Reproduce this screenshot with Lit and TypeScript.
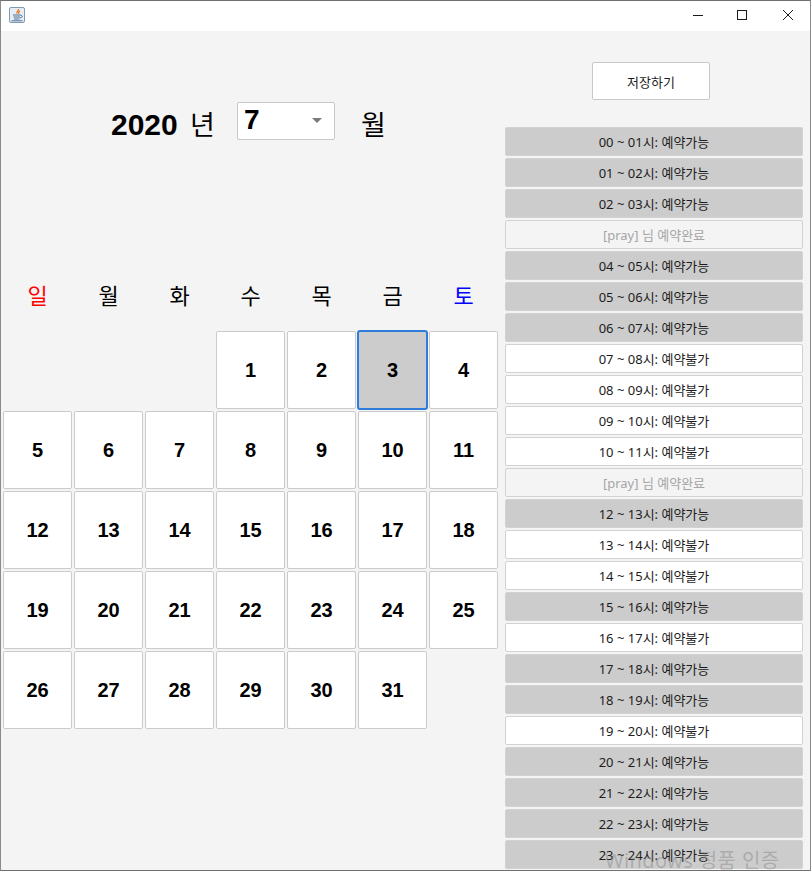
import { LitElement, html, css } from "lit";
import { customElement } from "lit/decorators.js";

const WEEKDAYS = [
  { label: "일", cls: "sun" },
  { label: "월", cls: "" },
  { label: "화", cls: "" },
  { label: "수", cls: "" },
  { label: "목", cls: "" },
  { label: "금", cls: "" },
  { label: "토", cls: "sat" },
];

type SlotState = "open" | "closed" | "booked";

// hour index -> state, same order as the list on the right
const SLOTS: SlotState[] = [
  "open", "open", "open", "booked", "open", "open", "open", "closed",
  "closed", "closed", "closed", "booked", "open", "closed", "closed", "open",
  "closed", "open", "open", "closed", "open", "open", "open", "open",
];

const pad = (n: number) => String(n).padStart(2, "0");

@customElement("app-root")
export class AppRoot extends LitElement {
  static styles = css`
    :host {
      display: block;
      width: 811px;
      height: 871px;
      overflow: hidden;
      position: relative;
      box-sizing: border-box;
      border-top: 1px solid #6f6f6f;
      border-left: 1px solid #8a8a8a;
      border-right: 1px solid #8a8a8a;
      border-bottom: 1px solid #6f6f6f;
      background: #f4f4f4;
      font-family: "Noto Sans", "Noto Sans CJK KR", sans-serif;
      color: #1c1c1c;
    }
    .titlebar {
      display: flex;
      align-items: center;
      height: 30px;
      background: #fff;
      padding-left: 8px;
    }
    .app-icon {
      width: 16px;
      height: 16px;
      display: block;
      margin-top: -2px;
    }
    .controls {
      margin-left: auto;
      display: flex;
      margin-top: -2px;
    }
    .ctl {
      width: 45px;
      height: 30px;
      display: flex;
      align-items: center;
      justify-content: center;
    }
    .ctl.max svg {
      margin-right: 2px;
    }
    .content {
      display: grid;
      grid-template-columns: 504px 298px;
      height: 839px;
    }
    .left {
      display: flex;
      flex-direction: column;
      padding-left: 2px;
    }
    .month-bar {
      display: flex;
      align-items: center;
      height: 62px;
      margin-top: 61px;
      padding-left: 108px;
      font-family: "Liberation Sans", "Noto Sans CJK KR", sans-serif;
      color: #000;
    }
    .year {
      font-size: 30px;
      font-weight: 700;
      width: 126px;
      white-space: nowrap;
    }
    .year span {
      font-size: 27px;
      font-weight: 400;
      margin-left: 4px;
    }
    .combo {
      box-sizing: border-box;
      width: 98px;
      height: 38px;
      margin-bottom: 4px;
      background: #fff;
      border: 1px solid #c8c8c8;
      border-radius: 2px;
      display: flex;
      align-items: flex-start;
      justify-content: space-between;
      padding: 0 12px 0 6px;
      font-size: 28px;
      font-weight: 700;
      line-height: 34px;
    }
    .combo i {
      width: 0;
      height: 0;
      margin-top: 15px;
      border-left: 5px solid transparent;
      border-right: 5px solid transparent;
      border-top: 5px solid #7a7a7a;
    }
    .month-label {
      font-size: 27px;
      margin-left: 26px;
    }
    .weekdays {
      display: grid;
      grid-template-columns: repeat(7, 69px);
      column-gap: 2px;
      margin-top: 120px;
      height: 40px;
      align-items: center;
      font-family: "Liberation Sans", "Noto Sans CJK KR", sans-serif;
      font-size: 22px;
      color: #000;
      text-align: center;
    }
    .sun {
      color: #ff0000;
    }
    .sat {
      color: #0000ff;
    }
    .days {
      display: grid;
      grid-template-columns: repeat(7, 69px);
      grid-auto-rows: 78px;
      column-gap: 2px;
      row-gap: 2px;
      margin-top: 17px;
    }
    .day {
      box-sizing: border-box;
      background: #fff;
      border: 1px solid #cbcbcb;
      border-radius: 2px;
      display: flex;
      align-items: center;
      justify-content: center;
      font-family: "Liberation Sans", sans-serif;
      font-size: 20px;
      font-weight: 700;
      color: #000;
    }
    .day.selected {
      background: #ccc;
      outline: 2px solid #2f7ddb;
      outline-offset: -1px;
    }
    .right {
      display: flex;
      flex-direction: column;
      align-items: stretch;
    }
    .save {
      box-sizing: border-box;
      align-self: center;
      width: 118px;
      height: 38px;
      margin-top: 31px;
      margin-right: 6px;
      margin-bottom: 27px;
      background: #fff;
      border: 1px solid #c8c8c8;
      border-radius: 2px;
      display: flex;
      align-items: center;
      justify-content: center;
      font-size: 13px;
      font-family: "Noto Sans CJK KR", sans-serif;
    }
    .slots {
      display: flex;
      flex-direction: column;
      gap: 2px;
    }
    .slot {
      box-sizing: border-box;
      height: 29px;
      border: 1px solid #d2d2d2;
      border-radius: 2px;
      display: flex;
      align-items: center;
      justify-content: center;
      font-size: 13px;
      white-space: pre;
    }
    .slot.open {
      background: #ccc;
    }
    .slot.closed {
      background: #fff;
    }
    .slot.booked {
      background: #f4f4f4;
      color: #a6a6a6;
    }
    .watermark {
      position: absolute;
      left: 604px;
      top: 847px;
      font-family: "Noto Sans", "Noto Sans CJK KR", sans-serif;
      font-size: 20px;
      line-height: 26px;
      color: rgba(130, 130, 130, 0.45);
      white-space: nowrap;
      letter-spacing: 0.4px;
    }
  `;

  private javaIcon() {
    return html`<svg class="app-icon" viewBox="0 0 16 16">
      <rect x="0.5" y="0.5" width="15" height="15" rx="1.5" fill="#e6edf4" stroke="#7f9ab5" />
      <path d="M9.500 2c1 1.500-2.500 2.600-1.500 4.600M11 4C9.500 5 9.300 5.800 10 6.800" fill="none" stroke="#ea7a22" stroke-width="1.300" />
      <path d="M4 8h7.500M4.500 10h6.500M5 12h5.500M2.500 13.800h11M11.500 8.500c2.500-.5 2.500 2-.5 2.500" fill="none" stroke="#4f7396" />
    </svg>`;
  }

  render() {
    const blanks = [0, 1, 2];
    const days = Array.from({ length: 31 }, (_, i) => i + 1);
    return html`
      <div class="titlebar">
        ${this.javaIcon()}
        <div class="controls">
          <div class="ctl">
            <svg width="10" height="10" viewBox="0 0 10 10"><path d="M0 5.500h10" stroke="#1a1a1a" fill="none" /></svg>
          </div>
          <div class="ctl max">
            <svg width="10" height="10" viewBox="0 0 10 10"><rect x="0.500" y="0.500" width="9" height="9" stroke="#1a1a1a" fill="none" /></svg>
          </div>
          <div class="ctl">
            <svg width="10" height="10" viewBox="0 0 10 10"><path d="M0 0l10 10M10 0L0 10" stroke="#1a1a1a" fill="none" /></svg>
          </div>
        </div>
      </div>
      <div class="content">
        <div class="left">
          <div class="month-bar">
            <div class="year">2020 <span>년</span></div>
            <div class="combo">7<i></i></div>
            <div class="month-label">월</div>
          </div>
          <div class="weekdays">
            ${WEEKDAYS.map((d) => html`<div class=${d.cls}>${d.label}</div>`)}
          </div>
          <div class="days">
            ${blanks.map(() => html`<div></div>`)}
            ${days.map(
              (d) => html`<div class="day ${d === 3 ? "selected" : ""}">${d}</div>`
            )}
          </div>
        </div>
        <div class="right">
          <div class="save">저장하기</div>
          <div class="slots">
            ${SLOTS.map((s, i) => {
              const time = `${pad(i)} ~ ${pad(i + 1)}시: `;
              if (s === "booked") return html`<div class="slot booked">[pray] 님 예약완료</div>`;
              return html`<div class="slot ${s}">${time}${s === "open" ? "예약가능" : "예약불가"}</div>`;
            })}
          </div>
        </div>
      </div>
      <div class="watermark">Windows 정품 인증</div>
    `;
  }
}
